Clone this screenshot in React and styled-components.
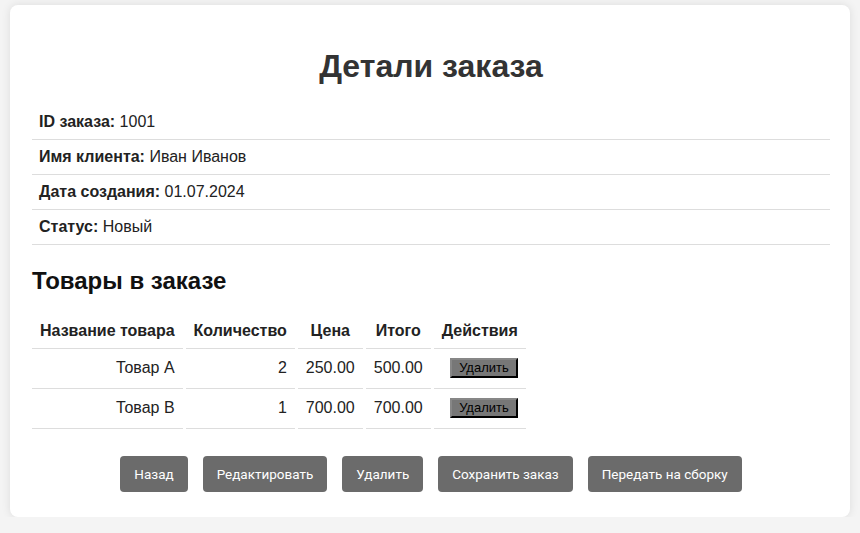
import React from 'react';
import styled, { createGlobalStyle } from 'styled-components';

const GlobalStyle = createGlobalStyle`
  body {
    margin: 0;
    background: #f4f4f4;
    font-family: "Liberation Sans", Arial, sans-serif;
    color: #222;
  }
`;

const Card = styled.div`
  box-sizing: border-box;
  width: 840px;
  margin: 5px auto 0;
  padding: 20px 20px 25px 22px;
  background: #fff;
  border-radius: 8px;
  box-shadow: 0 0 10px rgba(0, 0, 0, 0.1);
`;

const Title = styled.h1`
  margin: 23px 0 20px;
  text-align: center;
  font-size: 32px;
  line-height: 37px;
  color: #333;
`;

const InfoRow = styled.div`
  padding: 8px 7px;
  font-size: 16px;
  line-height: 18px;
  border-bottom: 1px solid #ddd;
`;

const Subtitle = styled.h2`
  margin: 22px 0 19px;
  font-size: 24px;
  line-height: 28px;
  color: #111;
`;

const Table = styled.table`
  border-spacing: 3px 0;
  margin-left: -3px;
  font-size: 16px;
  th {
    padding: 8px 8px;
    line-height: 18px;
    border-bottom: 1px solid #ddd;
    font-weight: bold;
  }
  td {
    height: 18px;
    padding: 10px 8px 11px;
    line-height: 18px;
    text-align: right;
    border-bottom: 1px solid #ddd;
  }
`;

const SmallButton = styled.button`
  font-family: "Liberation Sans", Arial, sans-serif;
  font-size: 13px;
  background: #777;
  color: #000;
  border: 2px outset #333;
  padding: 1px 7px;
  margin: -1px 0;
  line-height: 14px;
  vertical-align: top;
`;

const Actions = styled.div`
  display: flex;
  justify-content: center;
  gap: 15px;
  margin-top: 27px;
`;

const ActionButton = styled.button`
  font-family: Roboto, "Liberation Sans", Arial, sans-serif;
  font-size: 13.5px;
  height: 36px;
  padding: 0 14px;
  background: #6b6b6b;
  color: #fff;
  border: none;
  border-radius: 4px;
`;

const items = [
  { name: 'Товар A', qty: 2, price: '250.00', total: '500.00' },
  { name: 'Товар B', qty: 1, price: '700.00', total: '700.00' },
];

export default function App() {
  return (
    <>
      <GlobalStyle />
      <Card>
        <Title>Детали заказа</Title>
        <InfoRow><b>ID заказа:</b> 1001</InfoRow>
        <InfoRow><b>Имя клиента:</b> Иван Иванов</InfoRow>
        <InfoRow><b>Дата создания:</b> 01.07.2024</InfoRow>
        <InfoRow><b>Статус:</b> Новый</InfoRow>
        <Subtitle>Товары в заказе</Subtitle>
        <Table>
          <thead>
            <tr>
              <th>Название товара</th>
              <th>Количество</th>
              <th>Цена</th>
              <th>Итого</th>
              <th>Действия</th>
            </tr>
          </thead>
          <tbody>
            {items.map((it) => (
              <tr key={it.name}>
                <td>{it.name}</td>
                <td>{it.qty}</td>
                <td>{it.price}</td>
                <td>{it.total}</td>
                <td><SmallButton>Удалить</SmallButton></td>
              </tr>
            ))}
          </tbody>
        </Table>
        <Actions>
          <ActionButton>Назад</ActionButton>
          <ActionButton>Редактировать</ActionButton>
          <ActionButton>Удалить</ActionButton>
          <ActionButton>Сохранить заказ</ActionButton>
          <ActionButton>Передать на сборку</ActionButton>
        </Actions>
      </Card>
    </>
  );
}
